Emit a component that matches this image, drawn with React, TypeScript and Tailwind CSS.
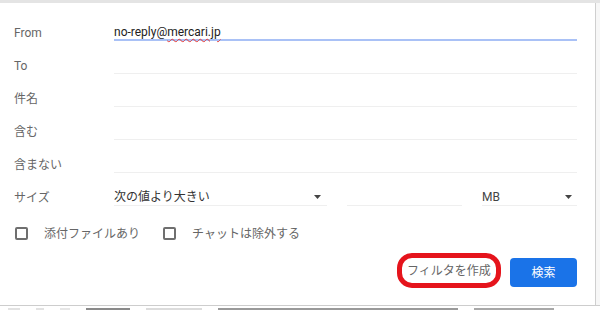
const font = { fontFamily: 'Roboto, "Noto Sans CJK JP", sans-serif' };

const Caret = () => (
  <svg width="7" height="4" viewBox="0 0 7 4" className="shrink-0">
    <path d="M0 0h7L3.5 4z" fill="#444" />
  </svg>
);

const FieldRow = ({ label, value, active }: { label: string; value?: React.ReactNode; active?: boolean }) => (
  <div className="flex h-[33px] items-center">
    <div className="w-[100px] text-[12px] text-[#666]">{label}</div>
    <div
      className={
        active
          ? "flex h-[17px] flex-1 items-center border-b-2 border-[#a9c1f6] text-[12px] text-[#222]"
          : "flex h-[17px] flex-1 items-center border-b border-[#efefef] text-[12px] text-[#222]"
      }
    >
      {value}
    </div>
  </div>
);

const Checkbox = ({ label }: { label: string }) => (
  <label className="flex items-center">
    <span className="h-[13px] w-[13px] rounded-[2px] border-2 border-[#6f6f6f]" />
    <span className="ml-[16px] text-[12px] text-[#666]">{label}</span>
  </label>
);

// the mail row under the panel is cut off, only blurred marks show
const marks = [
  { w: 12, c: "bg-[#e2e2e2]" },
  { w: 8, c: "bg-[#e2e2e2]" },
  { w: 10, c: "bg-[#e6e6e6]" },
  { w: 44, c: "bg-[#8a8a8a]" },
  { w: 56, c: "bg-[#dcdcdc]" },
  { w: 240, c: "bg-[#9a9a9a]" },
  { w: 80, c: "bg-[#a8a8a8]" },
];

export default function App() {
  return (
    <div className="flex h-[312px] w-[600px] flex-col overflow-hidden bg-[#f4f4f4]" style={font}>
      <div className="h-[3px] bg-[#e4e4e4]" />
      <div className="flex h-[302px]">
        <div className="flex w-[596px] flex-col border-r border-[#cfcfcf] bg-white pl-[14px] pr-[18px] pt-[13px]">
          <FieldRow
            label="From"
            active
            value={
              <span>
                no-reply@
                <span className="underline decoration-[#e53935] decoration-wavy decoration-1 underline-offset-2">
                  mercari.jp
                </span>
              </span>
            }
          />
          <FieldRow label="To" />
          <FieldRow label="件名" />
          <FieldRow label="含む" />
          <FieldRow label="含まない" />

          <div className="flex h-[33px] items-center">
            <div className="w-[100px] text-[12px] text-[#666]">サイズ</div>
            <div className="flex h-[17px] w-[213px] items-center justify-between border-b border-[#efefef] pr-[6px] text-[12px] text-[#333]">
              <span>次の値より大きい</span>
              <Caret />
            </div>
            <div className="ml-[20px] h-[17px] w-[115px] border-b border-[#efefef]" />
            <div className="ml-[20px] flex h-[17px] flex-1 items-center justify-between border-b border-[#efefef] pr-[5px] text-[12px] text-[#444]">
              <span>MB</span>
              <Caret />
            </div>
          </div>

          <div className="flex h-[39px] items-center gap-[23px] pl-px">
            <Checkbox label="添付ファイルあり" />
            <Checkbox label="チャットは除外する" />
          </div>

          <div className="flex items-start justify-end gap-[9px]">
            <span className="flex h-[35px] w-[104px] items-center justify-center rounded-[15px] border-[5px] border-[#e5141c] text-[12px] text-[#666]">
              フィルタを作成
            </span>
            <button className="mt-[5px] h-[29px] w-[67px] rounded-[4px] bg-[#1a73e8] text-[12px] text-white">
              検索
            </button>
          </div>
        </div>
        <div className="flex-1 bg-[#f7f7f7]" />
      </div>
      <div className="flex h-[7px] items-center gap-[16px] overflow-hidden border-t border-[#cdcdcd] bg-white pl-[8px]">
        {marks.map((m, i) => (
          <span key={i} className={`h-[2px] shrink-0 ${m.c}`} style={{ width: m.w }} />
        ))}
      </div>
    </div>
  );
}
